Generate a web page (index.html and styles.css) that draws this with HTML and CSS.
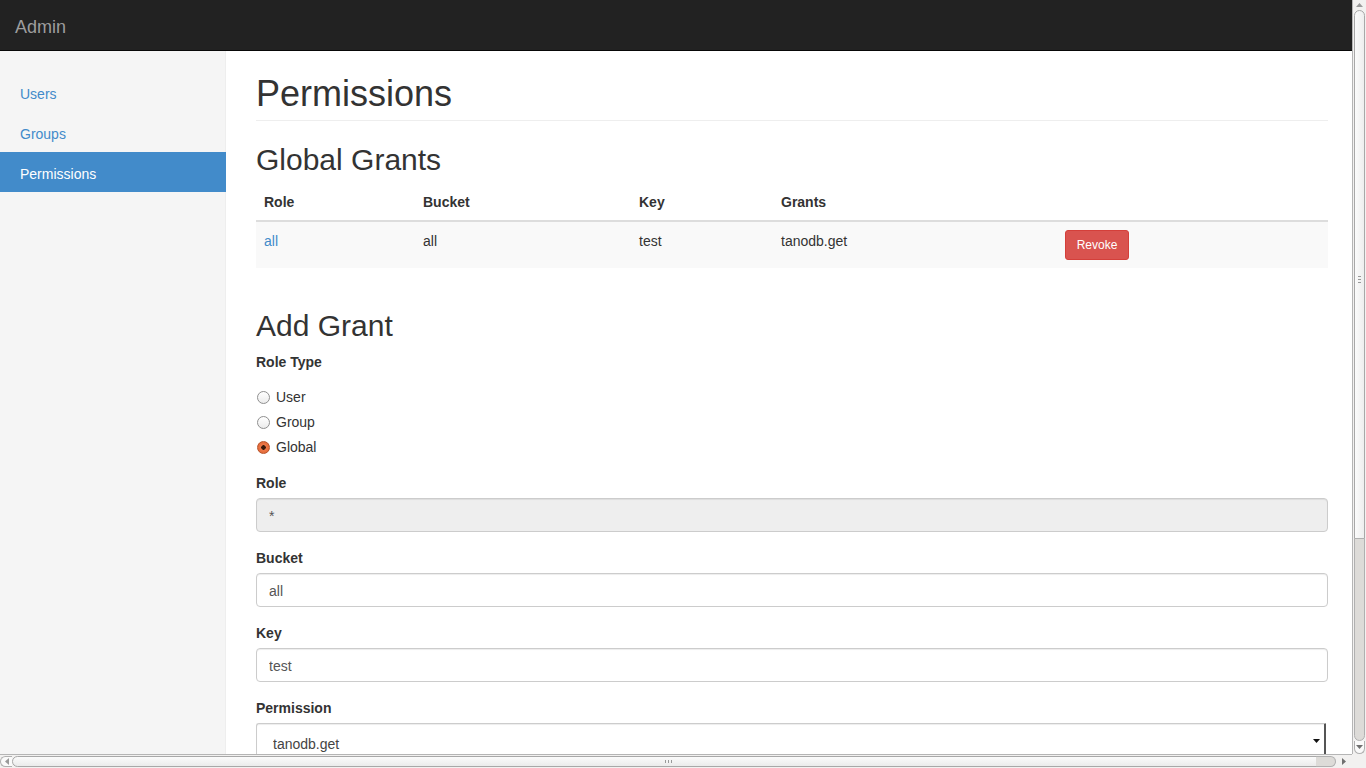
FILE: index.html
```html
<!DOCTYPE html>
<html>
<head>
<meta charset="utf-8">
<title>Admin</title>
<link rel="stylesheet" href="styles.css">
</head>
<body>
<div class="viewport">
  <header class="navbar"><span class="brand">Admin</span></header>
  <div class="layout">
    <aside class="sidebar">
      <ul class="nav">
        <li><a href="#">Users</a></li>
        <li><a href="#">Groups</a></li>
        <li class="active"><a href="#">Permissions</a></li>
      </ul>
    </aside>
    <main class="main">
      <h1 class="page-header">Permissions</h1>
      <h2 class="section-title">Global Grants</h2>
      <table class="table">
        <thead>
          <tr><th class="c-role">Role</th><th class="c-bucket">Bucket</th><th class="c-key">Key</th><th class="c-grants">Grants</th><th></th></tr>
        </thead>
        <tbody>
          <tr><td><a href="#">all</a></td><td>all</td><td>test</td><td>tanodb.get</td><td><button class="btn-danger">Revoke</button></td></tr>
        </tbody>
      </table>
      <h2 class="section-title">Add Grant</h2>
      <form class="form">
        <div class="form-group">
          <label class="lbl">Role Type</label>
          <div class="radio"><label><input type="radio" name="rt"> User</label></div>
          <div class="radio"><label><input type="radio" name="rt"> Group</label></div>
          <div class="radio"><label><input type="radio" name="rt" checked> Global</label></div>
        </div>
        <div class="form-group">
          <label class="lbl">Role</label>
          <input class="form-control" type="text" value="*" readonly>
        </div>
        <div class="form-group">
          <label class="lbl">Bucket</label>
          <input class="form-control" type="text" value="all">
        </div>
        <div class="form-group">
          <label class="lbl">Key</label>
          <input class="form-control" type="text" value="test">
        </div>
        <div class="form-group">
          <label class="lbl">Permission</label>
          <div class="select-wrap">
            <select class="form-select"><option>tanodb.get</option></select>
            <svg class="caret" width="7" height="4" viewBox="0 0 7 4"><path d="M0 0h7L3.5 4z" fill="#111"/></svg>
          </div>
        </div>
      </form>
    </main>
  </div>
</div>
<div class="vscroll">
  <div class="vbtn up"><svg width="7" height="4" viewBox="0 0 7 4"><path d="M0 4h7L3.5 0z" fill="#9a9a9a"/></svg></div>
  <div class="vthumb"><span class="grip"></span></div>
  <div class="vtrack"></div>
  <div class="vbtn down"><svg width="7" height="4" viewBox="0 0 7 4"><path d="M0 0h7L3.5 4z" fill="#707070"/></svg></div>
</div>
<div class="hscroll">
  <div class="hbtn left"><svg width="4" height="7" viewBox="0 0 4 7"><path d="M4 0v7L0 3.5z" fill="#9a9a9a"/></svg></div>
  <div class="hthumb"><span class="hgrip"></span></div>
  <div class="htrack"></div>
  <div class="hbtn right"><svg width="4" height="7" viewBox="0 0 4 7"><path d="M0 0v7L4 3.5z" fill="#707070"/></svg></div>
</div>
<div class="corner"></div>
</body>
</html>
```
FILE: styles.css
```css
* { box-sizing: border-box; }
html, body { margin: 0; height: 100%; }
body {
  display: grid;
  grid-template-columns: 1fr 14px;
  grid-template-rows: 1fr 14px;
  overflow: hidden;
  font-family: "Liberation Sans", Arial, sans-serif;
  font-size: 14px;
  line-height: 20px;
  color: #333;
  background: #fff;
}
.viewport {
  grid-column: 1; grid-row: 1;
  overflow: hidden;
  display: flex;
  flex-direction: column;
  min-height: 0;
}
.navbar {
  height: 51px;
  flex: 0 0 51px;
  background: #222;
  border-bottom: 1px solid #080808;
  display: flex;
  align-items: center;
  padding-left: 15px;
  padding-top: 4px;
}
.brand { color: #9d9d9d; font-size: 18px; line-height: 20px; }
.layout { display: flex; flex: 1; min-height: 0; }
.sidebar {
  width: 226px;
  flex: 0 0 226px;
  background: #f5f5f5;
  border-right: 1px solid #eee;
  padding-top: 21px;
}
.nav { list-style: none; margin: 0; padding: 0; margin-right: -1px; }
.nav li a {
  display: block;
  padding: 12px 20px 8px;
  color: #428bca;
  text-decoration: none;
}
.nav li.active a { background: #428bca; color: #fff; }
.main {
  flex: 1;
  padding: 23px 24px 0 30px;
  min-width: 0;
}
.page-header {
  margin: 0 0 20px;
  padding-bottom: 6px;
  border-bottom: 1px solid #eee;
  font-size: 36px;
  font-weight: 500;
  line-height: 39.6px;
}
.section-title {
  margin: 22px 0 8px;
  font-size: 30px;
  font-weight: 500;
  line-height: 33px;
}
.table {
  width: 100%;
  border-collapse: collapse;
  border-spacing: 0;
  margin-bottom: 41px;
}
.table th, .table td {
  padding: 8px;
  text-align: left;
  vertical-align: top;
  line-height: 20px;
}
.table th { border-bottom: 2px solid #ddd; font-weight: bold; }
.table tbody tr { background: #f9f9f9; }
.table td { height: 47px; padding-top: 9px; }
.table td a { color: #428bca; text-decoration: none; }
.c-role { width: 159px; }
.c-bucket { width: 216px; }
.c-key { width: 142px; }
.c-grants { width: 284px; }
.btn-danger {
  font-family: inherit;
  font-size: 12px;
  line-height: 18px;
  padding: 5px 10px;
  color: #fff;
  background: #d9534f;
  border: 1px solid #d43f3a;
  border-radius: 3px;
  width: 64px;
  height: 30px;
  margin-top: 0;
}
.table td:last-child { padding-top: 8px; }
.form { padding-top: 2px; }
.form-group { margin-bottom: 16px; }
.lbl { display: inline-block; margin-bottom: 5px; font-weight: bold; }
.radio { margin: 10px 0; min-height: 20px; padding-left: 20px; }
.radio + .radio { margin-top: -5px; }
.radio label { display: inline-block; cursor: pointer; position: relative; }
.radio input {
  -webkit-appearance: none;
  appearance: none;
  position: absolute;
  left: -19px;
  top: 4px;
  width: 13px;
  height: 13px;
  margin: 0;
  border: 1px solid #8f8f8f;
  border-radius: 50%;
  background: linear-gradient(#fff, #ececec);
}
.radio input:checked {
  border-color: #b8532a;
  background: radial-gradient(circle, #3b1a0c 0, #3b1a0c 2px, #ef7a4a 2.5px, #d95f2f 100%);
}
.form-control, .form-select {
  display: block;
  width: 100%;
  height: 34px;
  padding: 7px 12px 5px;
  font-family: inherit;
  font-size: 14px;
  line-height: 20px;
  color: #555;
  background: #fff;
  border: 1px solid #ccc;
  border-radius: 4px;
  box-shadow: inset 0 1px 1px rgba(0,0,0,.075);
}
.form-control[readonly] { background: #eee; }
.select-wrap { position: relative; margin-right: 2px; }
.form-select {
  -webkit-appearance: none;
  appearance: none;
  padding: 10px 16px 4px;
  border-right: 2px solid #555;
  border-radius: 3px 1px 1px 3px;
  color: #444;
}
.caret { position: absolute; right: 6px; top: 16px; }
/* scrollbars */
.vscroll {
  grid-column: 2; grid-row: 1;
  display: flex; flex-direction: column;
  background: #f2f1f0;
  border-left: 1px solid #b5b5b5;
  padding: 0 1px 0 1px;
}
.vbtn { height: 12px; flex: 0 0 12px; display: flex; justify-content: center; align-items: center; }
.vbtn.up { height: 10px; flex-basis: 10px; }
.vthumb {
  height: 534px; flex: 0 0 534px;
  background: linear-gradient(90deg, #fbfbfb, #eeeeee);
  border: 1px solid #a8a8a8;
  border-radius: 6px;
  display: flex; align-items: flex-end; justify-content: center;
  padding-bottom: 260px;
}
.grip { width: 3px; height: 7px; border-top: 1px solid #999; border-bottom: 1px solid #999; position: relative; }
.grip::after { content: ""; position: absolute; left: 0; right: 0; top: 2px; border-top: 1px solid #999; }
.vtrack {
  flex: 1;
  background: #dddbd8;
  border: 1px solid #b0b0b0;
  border-radius: 0 0 6px 6px;
  margin-top: -6px;
}
.vbtn.down { border: 1px solid #b0b0b0; border-top: 0; border-radius: 0 0 6px 6px; background: #fafafa; height: 13px; flex-basis: 13px; }
.hscroll {
  grid-column: 1; grid-row: 2;
  display: flex;
  background: #f2f1f0;
  border-top: 1px solid #b5b5b5;
  padding: 1px 0;
}
.hbtn { width: 12px; flex: 0 0 12px; display: flex; align-items: center; justify-content: center; }
.hbtn.left { border: 1px solid #b0b0b0; border-right: 0; border-radius: 6px 0 0 6px; background: #fafafa; }
.hthumb {
  width: 1310px; flex: 0 0 1310px;
  background: linear-gradient(#fbfbfb, #ebebeb);
  border: 1px solid #a8a8a8;
  border-radius: 6px;
  display: flex; align-items: center; justify-content: center;
}
.hgrip { width: 7px; height: 3px; border-left: 1px solid #999; border-right: 1px solid #999; position: relative; margin-left: 2px; }
.hgrip::after { content: ""; position: absolute; top: 0; bottom: 0; left: 2px; border-left: 1px solid #999; }
.htrack { flex: 1; background: #dddbd8; border: 1px solid #b0b0b0; border-left: 0; border-radius: 0 6px 6px 0; margin-left: -6px; }
.hbtn.right { width: 16px; flex-basis: 16px; }
.corner { grid-column: 2; grid-row: 2; background: #f2f1f0; }
```
